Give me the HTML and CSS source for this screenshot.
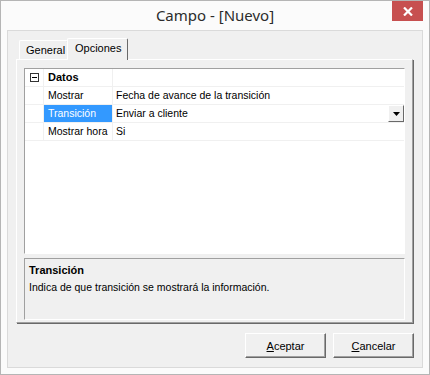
FILE: index.html
```html
<!DOCTYPE html>
<html lang="es">
<head>
<meta charset="UTF-8" />
<title>Campo - [Nuevo]</title>
<link rel="stylesheet" href="styles.css">
</head>
<body>
<div class="window">
	<div class="titlebar">
		<div></div>
		<div class="title">Campo - [Nuevo]</div>
		<div class="close-box">
			<div class="close">
				<svg width="10" height="9" viewBox="0 0 10 9">
					<path d="M1 0.5 L9 8.5 M9 0.5 L1 8.5" stroke="#fff" stroke-width="2.2" />
				</svg>
			</div>
		</div>
	</div>
	<div class="client">
		<div class="tabs">
			<div class="tab">General</div>
			<div class="tab active">Opciones</div>
		</div>
		<div class="panel">
			<div class="grid">
				<div class="row cat">
					<div class="margin"><span class="minus"></span></div>
					<div class="label">Datos</div>
					<div class="value"></div>
				</div>
				<div class="row">
					<div class="margin"></div>
					<div class="label">Mostrar</div>
					<div class="value">Fecha de avance de la transición</div>
				</div>
				<div class="row">
					<div class="margin"></div>
					<div class="label selected">Transición</div>
					<div class="value">
						<span>Enviar a cliente</span>
						<span class="drop">
							<svg width="7" height="4" viewBox="0 0 7 4"><path d="M0 0 H7 L3.5 4 Z" fill="#000" /></svg>
						</span>
					</div>
				</div>
				<div class="row">
					<div class="margin"></div>
					<div class="label">Mostrar hora</div>
					<div class="value">Si</div>
				</div>
			</div>
			<div class="desc">
				<div class="desc-title">Transición</div>
				<div class="desc-text">Indica de que transición se mostrará la información.</div>
			</div>
		</div>
		<div class="buttons">
			<div class="button"><u>A</u>ceptar</div>
			<div class="button"><u>C</u>ancelar</div>
		</div>
	</div>
</div>
</body>
</html>
```

FILE: styles.css
```css
* {
	box-sizing: border-box;
}

body {
	margin: 0;
	font-family: "Liberation Sans", Arial, sans-serif;
	font-size: 10.5px;
	color: #000;
}

.window {
	width: 430px;
	height: 375px;
	border: 1px solid #b5b5b5;
	background-color: #fbfbfb;
	display: flex;
	flex-direction: column;
	padding: 0 6px 6px 6px;
}

.titlebar {
	height: 29px;
	display: grid;
	grid-template-columns: 1fr auto 1fr;
	align-items: start;
}

.title {
	font-family: "Noto Sans", sans-serif;
	font-size: 15px;
	color: #2b2b2b;
	line-height: 29px;
}

.close-box {
	display: flex;
	justify-content: flex-end;
}

.close {
	width: 31px;
	height: 20px;
	background-color: #c75050;
	display: flex;
	justify-content: center;
	align-items: center;
}

.client {
	flex: 1;
	border: 1px solid #dadada;
	background-color: #f0f0f0;
	padding: 7px 8px 0 8px;
	display: flex;
	flex-direction: column;
}

.tabs {
	height: 21px;
	display: flex;
	align-items: flex-end;
	padding-left: 3px;
	position: relative;
	z-index: 1;
}

.tab {
	height: 19px;
	width: 49px;
	border-top: 1px solid #fff;
	border-left: 1px solid #fff;
	border-right: 1px solid #a0a0a0;
	border-radius: 2px 2px 0 0;
	padding: 3px 0 0 6px;
	font-size: 11px;
}

.tab.active {
	height: 22px;
	width: 61px;
	margin-left: -1px;
	margin-bottom: -1px;
	background-color: #f0f0f0;
	border-right: 1px solid #696969;
	padding: 3px 0 0 7px;
}

.panel {
	height: 264px;
	margin-right: 1px;
	border-top: 1px solid #fff;
	border-left: 1px solid #fff;
	border-right: 1px solid #a0a0a0;
	border-bottom: 1px solid #a0a0a0;
	box-shadow: 1px 1px 0 #696969;
	padding: 8px 7px 0 7px;
}

.grid {
	height: 186px;
	background-color: #fff;
	border-top: 1px solid #a0a0a0;
	border-left: 1px solid #a0a0a0;
	border-right: 1px solid #fff;
	border-bottom: 1px solid #fff;
}

.row {
	display: flex;
	height: 18px;
	border-bottom: 1px solid #f0f0f0;
}

.row .margin {
	width: 19px;
	border-right: 1px solid #f0f0f0;
	padding: 4px 0 0 5px;
}

.minus {
	display: block;
	width: 9px;
	height: 9px;
	border: 1px solid #333;
	position: relative;
}

.minus::after {
	content: "";
	position: absolute;
	left: 1px;
	top: 3px;
	width: 5px;
	height: 1px;
	background-color: #000;
}

.row .label {
	width: 69px;
	border-right: 1px solid #f0f0f0;
	padding-left: 4px;
	line-height: 17px;
	white-space: nowrap;
}

.row .label.selected {
	background-color: #3399ff;
	color: #fff;
}

.row.cat .label {
	font-weight: bold;
	font-size: 11px;
}

.row .value {
	flex: 1;
	padding-left: 3px;
	line-height: 17px;
	display: flex;
	justify-content: space-between;
}

.drop {
	width: 16px;
	height: 17px;
	background-color: #f0f0f0;
	border-top: 1px solid #fff;
	border-left: 1px solid #fff;
	border-right: 1px solid #696969;
	border-bottom: 1px solid #696969;
	display: flex;
	justify-content: center;
	align-items: center;
}

.desc {
	height: 62px;
	margin-top: 4px;
	border-top: 1px solid #a0a0a0;
	border-left: 1px solid #a0a0a0;
	border-right: 1px solid #fff;
	border-bottom: 1px solid #fff;
	padding: 4px 4px;
}

.desc-title {
	font-weight: bold;
	font-size: 11px;
	line-height: 14px;
}

.desc-text {
	line-height: 14px;
	margin-top: 3px;
}

.buttons {
	margin-top: 10px;
	display: flex;
	justify-content: flex-end;
	gap: 7px;
}

.button {
	width: 81px;
	height: 25px;
	font-size: 11px;
	border-top: 1px solid #fff;
	border-left: 1px solid #fff;
	border-right: 1px solid #696969;
	border-bottom: 1px solid #696969;
	box-shadow: inset -1px -1px 0 #a0a0a0;
	display: flex;
	justify-content: center;
	align-items: center;
}
```
